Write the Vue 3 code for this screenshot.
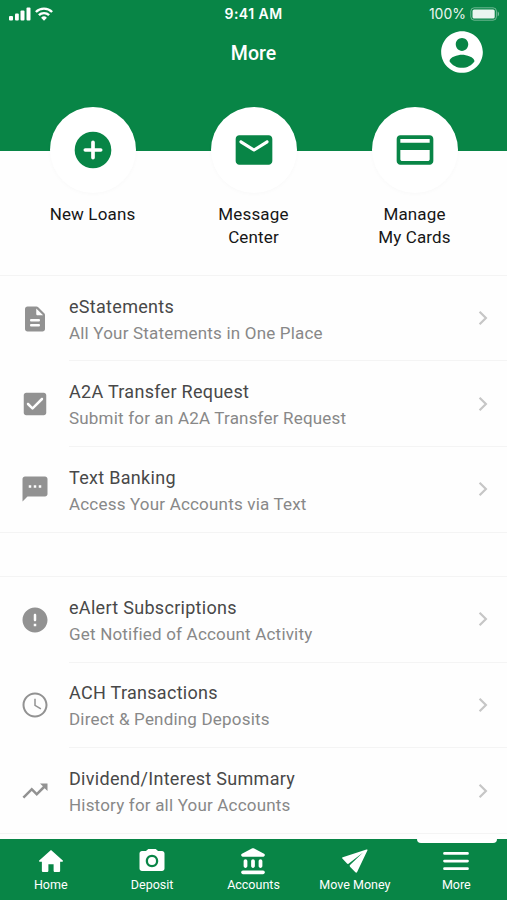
<template>
  <div class="app">
    <header class="header">
      <div class="status-bar">
        <div class="status-left">
          <svg class="signal" viewBox="0 0 22 14">
            <rect x="0" y="9" width="4" height="4.5" rx="1" />
            <rect x="6" y="6.5" width="3.8" height="7" rx="1" />
            <rect x="11.5" y="3.5" width="4" height="10" rx="1" />
            <rect x="17.5" y="0.5" width="4" height="13" rx="1" />
          </svg>
          <svg class="wifi" viewBox="0 0 18 14">
            <path d="M0.9 5a11.4 11.4 0 0 1 16.2 0" />
            <path d="M3.9 8.2a7.2 7.2 0 0 1 10.2 0" />
            <path class="dot" d="M9 13.7l-2.9-3a4.2 4.2 0 0 1 5.8 0z" />
          </svg>
        </div>
        <span class="time">9:41 AM</span>
        <div class="status-right">
          <span>100%</span>
          <svg class="battery" viewBox="0 0 30 14">
            <rect class="outline" x="0.8" y="0.8" width="25.6" height="12.4" rx="3.4" />
            <rect x="2.5" y="2.5" width="22.2" height="9" rx="1.6" />
            <path class="cap" d="M27.7 4.6c1.7.5 1.7 4.3 0 4.8z" />
          </svg>
        </div>
      </div>
      <div class="title-bar">
        <h1>More</h1>
        <button class="profile" aria-label="Profile">
          <svg viewBox="0 0 24 24">
            <path d="M12 2C6.48 2 2 6.48 2 12s4.48 10 10 10 10-4.48 10-10S17.52 2 12 2zm0 3.3c1.66 0 3 1.34 3 3s-1.34 3.2-3 3.2-3-1.54-3-3.2 1.34-3 3-3zm0 14.3c-2.5 0-4.71-1.28-6-3.22.03-1.99 4-3.08 6-3.08 1.99 0 5.97 1.09 6 3.08-1.29 1.94-3.5 3.22-6 3.22z" />
          </svg>
        </button>
      </div>
    </header>

    <section class="shortcuts">
      <a v-for="item in shortcuts" :key="item.label" class="shortcut">
        <span class="circle">
          <svg viewBox="0 0 24 24">
            <path :d="item.icon" />
            <path v-if="item.stroke" class="line" :d="item.stroke" />
          </svg>
        </span>
        <span class="shortcut-label">{{ item.label }}</span>
      </a>
    </section>

    <main>
      <ul v-for="(group, index) in groups" :key="index" class="group">
        <li v-for="row in group" :key="row.title" class="row">
          <svg class="row-icon" viewBox="0 0 24 24"><path :d="row.icon" /></svg>
          <div class="row-body">
            <div class="row-text">
              <div class="row-title">{{ row.title }}</div>
              <div class="row-sub">{{ row.sub }}</div>
            </div>
            <svg class="chevron" viewBox="0 0 10 16"><path d="M1.6 1.8L7.9 8l-6.3 6.2" /></svg>
          </div>
        </li>
      </ul>
    </main>

    <nav class="tabs">
      <button
        v-for="tab in tabs"
        :key="tab.label"
        class="tab"
        :class="{ active: tab.label === activeTab }"
        @click="activeTab = tab.label"
      >
        <svg :viewBox="tab.viewBox || '0 0 24 24'"><path :d="tab.icon" /></svg>
        <span>{{ tab.label }}</span>
      </button>
    </nav>
  </div>
</template>

<script setup>
import { ref } from 'vue';

const activeTab = ref('More');

const shortcuts = [
  {
    label: 'New Loans',
    icon: 'M12 2a10 10 0 1 0 0 20 10 10 0 0 0 0-20z',
    stroke: 'M12 7.8v8.4M7.8 12h8.4',
  },
  {
    label: 'Message\nCenter',
    icon: 'M20 4H4c-1.1 0-2 .9-2 2v12c0 1.1.9 2 2 2h16c1.1 0 2-.9 2-2V6c0-1.1-.9-2-2-2zm-.4 4.25l-7.07 4.42c-.32.2-.74.2-1.06 0L4.4 8.25c-.25-.16-.4-.43-.4-.72 0-.67.73-1.07 1.3-.72L12 11l6.7-4.19c.57-.35 1.3.05 1.3.72 0 .29-.15.56-.4.72z',
  },
  {
    label: 'Manage\nMy Cards',
    icon: 'M20 4H4c-1.11 0-1.99.89-1.99 2L2 18c0 1.11.89 2 2 2h16c1.11 0 2-.89 2-2V6c0-1.11-.89-2-2-2zm-1 14H5c-.55 0-1-.45-1-1v-5h16v5c0 .55-.45 1-1 1zm1-10H4V6h16v2z',
  },
];

const groups = [
  [
    {
      title: 'eStatements',
      sub: 'All Your Statements in One Place',
      icon: 'M14.59 2.59c-.38-.38-.89-.59-1.42-.59H6c-1.1 0-2 .9-2 2v16c0 1.1.89 2 1.99 2H18c1.1 0 2-.9 2-2V8.83c0-.53-.21-1.04-.59-1.41l-4.82-4.83zM15 18H9c-.55 0-1-.45-1-1s.45-1 1-1h6c.55 0 1 .45 1 1s-.45 1-1 1zm0-4H9c-.55 0-1-.45-1-1s.45-1 1-1h6c.55 0 1 .45 1 1s-.45 1-1 1zm-2-6V3.5L18.5 9H14c-.55 0-1-.45-1-1z',
    },
    {
      title: 'A2A Transfer Request',
      sub: 'Submit for an A2A Transfer Request',
      icon: 'M19 3H5c-1.1 0-2 .9-2 2v14c0 1.1.9 2 2 2h14c1.1 0 2-.9 2-2V5c0-1.1-.9-2-2-2zm-8.29 13.29c-.39.39-1.02.39-1.41 0L5.71 12.7c-.39-.39-.39-1.02 0-1.41s1.02-.39 1.41 0L10 14.17l6.88-6.88c.39-.39 1.02-.39 1.41 0s.39 1.02 0 1.41l-7.58 7.59z',
    },
    {
      title: 'Text Banking',
      sub: 'Access Your Accounts via Text',
      icon: 'M20 2H4c-1.1 0-1.99.9-1.99 2L2 22l4-4h14c1.1 0 2-.9 2-2V4c0-1.1-.9-2-2-2zM9 11H7V9h2v2zm4 0h-2V9h2v2zm4 0h-2V9h2v2z',
    },
  ],
  [
    {
      title: 'eAlert Subscriptions',
      sub: 'Get Notified of Account Activity',
      icon: 'M12 2C6.48 2 2 6.48 2 12s4.48 10 10 10 10-4.48 10-10S17.52 2 12 2zm0 11c-.55 0-1-.45-1-1V8c0-.55.45-1 1-1s1 .45 1 1v4c0 .55-.45 1-1 1zm1 4h-2v-2h2v2z',
    },
    {
      title: 'ACH Transactions',
      sub: 'Direct & Pending Deposits',
      icon: 'M11.99 2C6.47 2 2 6.48 2 12s4.47 10 9.99 10C17.52 22 22 17.52 22 12S17.52 2 11.99 2zM12 20.4c-4.64 0-8.4-3.76-8.4-8.4S7.36 3.6 12 3.6s8.4 3.76 8.4 8.4-3.76 8.4-8.4 8.4zm.6-13.4h-1.2v5.6l5 3 .65-1.05-4.45-2.65z',
    },
    {
      title: 'Dividend/Interest Summary',
      sub: 'History for all Your Accounts',
      icon: 'M16 6l2.29 2.29-4.88 4.88-4-4L2 16.59 3.41 18l6-6 4 4 6.3-6.29L22 12V6z',
    },
  ],
];

const tabs = [
  {
    label: 'Home',
    viewBox: '0.5 0 23 23',
    icon: 'M10 19v-5h4v5c0 .55.45 1 1 1h3c.55 0 1-.45 1-1v-7h1.7c.46 0 .68-.57.33-.87L12.67 3.6c-.38-.34-.96-.34-1.34 0l-8.36 7.53c-.34.3-.13.87.33.87H5v7c0 .55.45 1 1 1h3c.55 0 1-.45 1-1z',
  },
  {
    label: 'Deposit',
    icon: 'M12 8.8a3.2 3.2 0 1 0 0 6.4 3.2 3.2 0 0 0 0-6.4zM9 2.4L7.17 4H4c-1.1 0-2 .9-2 2v12c0 1.1.9 2 2 2h16c1.1 0 2-.9 2-2V6c0-1.1-.9-2-2-2h-3.17L15 2.4H9zm3 14.6c-2.76 0-5-2.24-5-5s2.24-5 5-5 5 2.24 5 5-2.24 5-5 5z',
  },
  {
    label: 'Accounts',
    viewBox: '-0.5 -0.5 24 24',
    icon: 'M4 11.5v4c0 .83.67 1.5 1.5 1.5S7 16.33 7 15.5v-4c0-.83-.67-1.5-1.5-1.5S4 10.67 4 11.5zm6 0v4c0 .83.67 1.5 1.5 1.5s1.5-.67 1.5-1.5v-4c0-.83-.67-1.5-1.5-1.5s-1.5.67-1.5 1.5zM3.5 22h16c.83 0 1.5-.67 1.5-1.5s-.67-1.5-1.5-1.5h-16c-.83 0-1.5.67-1.5 1.5S2.67 22 3.5 22zM16 11.5v4c0 .83.67 1.5 1.5 1.5s1.5-.67 1.5-1.5v-4c0-.83-.67-1.5-1.5-1.5s-1.5.67-1.5 1.5zM10.57 1.49l-7.9 4.16c-.41.21-.67.64-.67 1.1C2 7.44 2.56 8 3.25 8h16.51C20.44 8 21 7.44 21 6.75c0-.46-.26-.89-.67-1.1l-7.9-4.16c-.58-.31-1.28-.31-1.86 0z',
  },
  {
    label: 'Move Money',
    icon: 'M21.2 2.8L2.2 8.9c-.6.2-.7.7-.3 1.1l3.7 4c.4.4.8.4 1.2.1L18.4 5.2 8 15.2c-.4.4-.4.9 0 1.3l4.3 4.5c.5.5 1.1.4 1.4-.2l8.2-17.1c.3-.6-.1-1.1-.7-.9z',
  },
  {
    label: 'More',
    icon: 'M2.8 7h18.4a1.1 1.1 0 0 0 0-2.2H2.8a1.1 1.1 0 0 0 0 2.2zm0 6.1h18.4a1.1 1.1 0 0 0 0-2.2H2.8a1.1 1.1 0 0 0 0 2.2zm0 6.1h18.4a1.1 1.1 0 0 0 0-2.2H2.8a1.1 1.1 0 0 0 0 2.2z',
  },
];
</script>

<style>
body {
  margin: 0;
  background: #fefefe;
}
</style>

<style scoped>
.app {
  display: flex;
  flex-direction: column;
  width: 507px;
  height: 900px;
  overflow: hidden;
  background: #fefefe;
  font-family: Roboto, sans-serif;
}

.header {
  flex: none;
  height: 151px;
  background: #088546;
  color: #fff;
}

.status-bar {
  display: grid;
  grid-template-columns: 1fr auto 1fr;
  align-items: center;
  height: 27px;
  padding: 0 7px 0 9px;
  font-family: Inter, sans-serif;
  font-size: 14px;
}

.status-left,
.status-right {
  display: flex;
  align-items: center;
  gap: 4px;
}

.status-right {
  justify-content: flex-end;
  opacity: 0.92;
}

.time {
  margin-right: 2px;
  font-weight: 600;
  letter-spacing: 0.45px;
}

.signal {
  width: 22px;
  height: 14px;
  fill: #fff;
}

.wifi {
  width: 18px;
  height: 14px;
  fill: none;
  stroke: #fff;
  stroke-width: 2.4;
}

.wifi .dot {
  fill: #fff;
  stroke: none;
}

.battery {
  width: 30px;
  height: 14px;
  fill: #fff;
}

.battery .outline {
  fill: none;
  stroke: #fff;
  opacity: 0.45;
}

.battery .cap {
  opacity: 0.5;
}

.title-bar {
  display: grid;
  grid-template-columns: 1fr auto 1fr;
  align-items: center;
  height: 50px;
  padding-right: 20px;
}

.title-bar h1 {
  grid-column: 2;
  margin: 2px 0 0 20px;
  font-size: 19.5px;
  font-weight: 500;
  letter-spacing: 0;
}

.profile {
  justify-self: end;
  width: 50px;
  height: 50px;
  padding: 0;
  border: none;
  background: none;
  cursor: pointer;
}

.profile svg {
  display: block;
  fill: #fff;
}

.shortcuts {
  display: grid;
  grid-template-columns: repeat(3, 1fr);
  flex: none;
  box-sizing: border-box;
  height: 168px;
  margin-top: -44px;
  padding: 0 12px;
}

.shortcut {
  display: flex;
  flex-direction: column;
  align-items: center;
  cursor: pointer;
}

.circle {
  display: flex;
  align-items: center;
  justify-content: center;
  width: 86px;
  height: 86px;
  border-radius: 50%;
  background: #fff;
  box-shadow: 0 1px 4px rgba(0, 0, 0, 0.025);
}

.circle svg {
  width: 44px;
  height: 44px;
  fill: #088546;
}

.circle .line {
  fill: none;
  stroke: #fff;
  stroke-width: 2;
  stroke-linecap: round;
}

.shortcut-label {
  margin-top: 10px;
  color: #161616;
  font-size: 17px;
  line-height: 22.5px;
  letter-spacing: 0.15px;
  text-align: center;
  white-space: pre-line;
}

.group {
  margin: 0 0 43px;
  padding: 0;
  border-top: 1px solid #f4f4f4;
  border-bottom: 1px solid #f4f4f4;
  list-style: none;
}

.row {
  display: flex;
  align-items: center;
  height: 85.4px;
  padding-left: 20px;
}

.row-icon {
  flex: none;
  width: 30px;
  height: 30px;
  margin-right: 19px;
  fill: #929292;
}

.row-body {
  display: flex;
  flex: 1;
  align-items: center;
  justify-content: space-between;
  box-sizing: border-box;
  height: 100%;
  padding-right: 19px;
  border-bottom: 1px solid #f4f4f4;
}

.row:last-child .row-body {
  border-bottom: none;
}

.row-text {
  padding-top: 3px;
}

.row-title {
  color: #484848;
  font-size: 18px;
  line-height: 26px;
  letter-spacing: 0.3px;
}

.row-sub {
  color: #888;
  font-size: 17px;
  line-height: 26px;
  letter-spacing: 0.19px;
}

.chevron {
  width: 10px;
  height: 16px;
  fill: none;
  stroke: #c6c6c6;
  stroke-width: 2.2;
}

.tabs {
  position: fixed;
  top: 839px;
  left: 0;
  display: grid;
  grid-template-columns: repeat(5, 1fr);
  width: 507px;
  height: 61px;
  background: #088546;
}

.tab {
  position: relative;
  display: flex;
  flex-direction: column;
  align-items: center;
  padding: 7px 0 0;
  border: none;
  background: none;
  color: #fff;
  font: 12.5px/16px Roboto, sans-serif;
  letter-spacing: 0;
  cursor: pointer;
}

.tab svg {
  width: 30px;
  height: 30px;
  margin-bottom: 1px;
  fill: #fff;
}

.tab.active::before {
  content: '';
  position: absolute;
  top: 0;
  left: 11px;
  width: 80px;
  height: 4px;
  border-radius: 0 0 4px 4px;
  background: #fff;
}
</style>
